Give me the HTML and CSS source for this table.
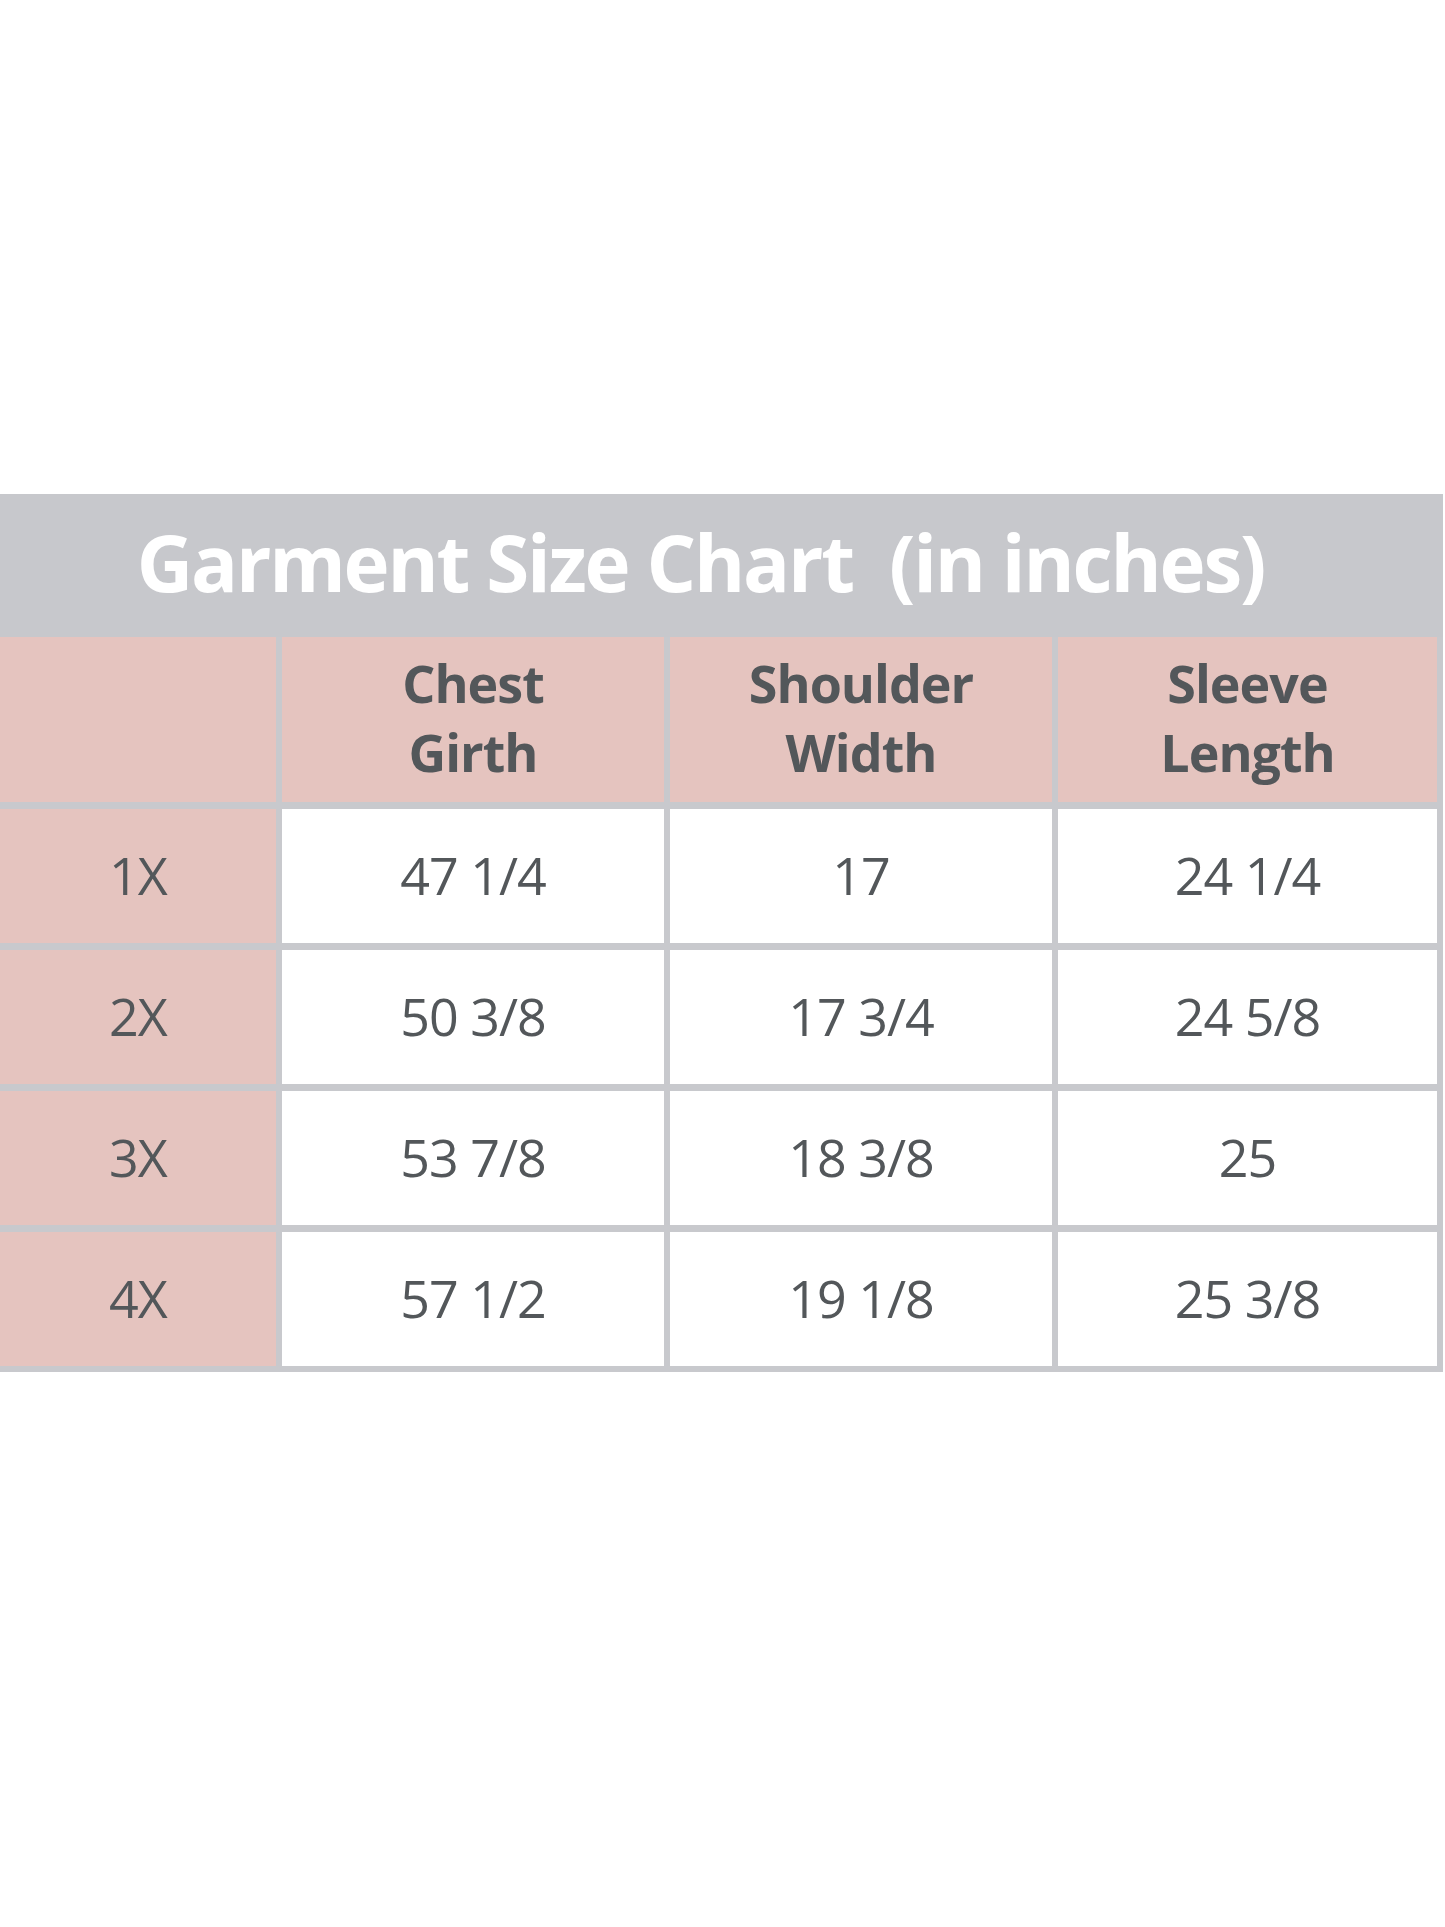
FILE: index.html
```html
<!DOCTYPE html>
<html lang="en">
<head>
<meta charset="utf-8">
<title>Garment Size Chart</title>
<link rel="stylesheet" href="styles.css">
</head>
<body>
<div class="page">
  <div class="chart">
    <div class="title">Garment Size Chart&nbsp; (in inches)</div>
    <div class="grid">
      <div class="cell head"></div>
      <div class="cell head">Chest<br>Girth</div>
      <div class="cell head">Shoulder<br>Width</div>
      <div class="cell head">Sleeve<br>Length</div>

      <div class="cell size">1X</div>
      <div class="cell val">47 1/4</div>
      <div class="cell val">17</div>
      <div class="cell val">24 1/4</div>

      <div class="cell size">2X</div>
      <div class="cell val">50 3/8</div>
      <div class="cell val">17 3/4</div>
      <div class="cell val">24 5/8</div>

      <div class="cell size">3X</div>
      <div class="cell val">53 7/8</div>
      <div class="cell val">18 3/8</div>
      <div class="cell val">25</div>

      <div class="cell size">4X</div>
      <div class="cell val">57 1/2</div>
      <div class="cell val">19 1/8</div>
      <div class="cell val">25 3/8</div>
    </div>
  </div>
</div>
</body>
</html>
```

FILE: styles.css
```css
html, body {
  margin: 0;
  padding: 0;
  background: #ffffff;
}

.page {
  width: 1445px;
  height: 1927px;
  padding-top: 494px;
  box-sizing: border-box;
  font-family: "Open Sans", "Noto Sans", sans-serif;
}

.chart {
  width: 1443px;
}

.title {
  height: 143px;
  background: #c7c8cc;
  color: #ffffff;
  font-weight: 700;
  font-size: 78px;
  letter-spacing: -2.2px;
  display: flex;
  align-items: center;
  justify-content: center;
  padding-right: 42px;
  padding-bottom: 8px;
  box-sizing: border-box;
  white-space: nowrap;
}

.grid {
  display: grid;
  grid-template-columns: 276px 382px 382px 379px;
  grid-template-rows: 165px 134px 134px 134px 134px;
  column-gap: 6px;
  row-gap: 7px;
  padding: 0 6px 6px 0;
  background: #c8c9cd;
}

.cell {
  display: flex;
  align-items: center;
  justify-content: center;
  text-align: center;
  color: #53575a;
  padding-bottom: 4px;
  box-sizing: border-box;
}

.head {
  background: #e5c4bf;
  font-weight: 700;
  font-size: 52px;
  line-height: 69px;
  letter-spacing: -1px;
  padding-bottom: 6px;
}

.size {
  background: #e5c4bf;
  font-size: 52px;
  letter-spacing: -1px;
}

.val {
  background: #ffffff;
  font-size: 52px;
  letter-spacing: -1px;
}
```
